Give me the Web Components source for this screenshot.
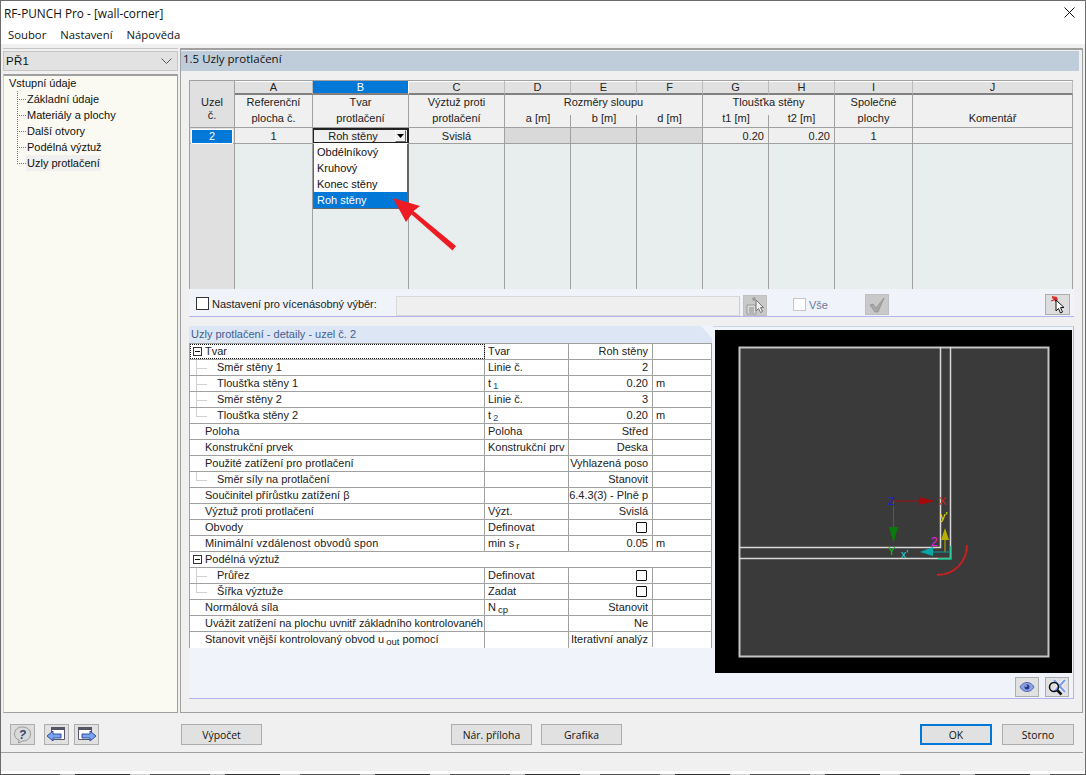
<!DOCTYPE html>
<html lang="cs"><head><meta charset="utf-8"><title>RF-PUNCH Pro</title>
<style>
html,body{margin:0;padding:0;background:#fff}
body{width:1086px;height:775px;overflow:hidden;font-family:"Liberation Sans",Arial,sans-serif}
</style></head>
<body>
<rf-app></rf-app>
<script>
const LINE='#a0a0a0';
function def(name,css,html,init){
  customElements.define(name,class extends HTMLElement{
    constructor(){super();const r=this.attachShadow({mode:'open'});
      r.innerHTML='<style>'+css+'</style>'+(typeof html==='function'?html(this):html);}
    connectedCallback(){if(init&&!this._i){this._i=1;init(this,this.shadowRoot);}}
  });
}
/* ---------- small button ---------- */
def('rf-btn',`:host{display:flex;align-items:center;justify-content:center;box-sizing:border-box;height:21px;background:#e1e1e1;border:1px solid #adadad;font:10.4px "Open Sans",sans-serif;color:#111;flex:none}
:host([primary]){border:2px solid #0078d7}
:host([off]){background:#c9c9c9;border-color:#c0c0c0}
::slotted(svg){display:block}`,'<slot></slot>');

/* ---------- title + menu ---------- */
def('rf-titlebar',`:host{display:flex;align-items:center;justify-content:space-between;height:23px;background:#fff;font:11.8px "Open Sans",sans-serif;color:#111;padding:0 10px 0 3px}
svg{display:block}`,`<span>RF-PUNCH Pro - [wall-corner]</span>
<svg width="11" height="11" viewBox="0 0 11 11"><path d="M.5.5l10 10M10.500.5l-10 10" stroke="#111" fill="none"/></svg>`);
def('rf-menubar',`:host{display:flex;gap:14px;height:20px;align-items:center;background:#fff;padding:0 0 0 7px;font:11.3px "Open Sans",sans-serif;color:#111}`,
`<span>Soubor</span><span>Nastavení</span><span>Nápověda</span>`);

/* ---------- navigation ---------- */
def('rf-nav',`:host{display:flex;flex-direction:column;width:175px;flex:none;box-sizing:border-box;padding-top:2px;border-top:1px solid #c4c4c4}
.combo{display:flex;align-items:center;justify-content:space-between;height:20px;box-sizing:border-box;background:#e2e2e2;border:1px solid #c6c6c6;margin-bottom:3px;padding:0 5px 0 2px;font:11.5px "Liberation Sans",sans-serif;color:#111;letter-spacing:.3px}
.tree{flex:1;background:#fbfaf2;border:1px solid ${LINE};border-top-width:2px;border-left-color:#d0d0d0;padding:0 0 0 5px;font:11px "Liberation Sans",sans-serif;color:#111;position:relative}
.root{height:16px;line-height:16px;margin-top:-1px}
.branch{position:relative;margin:0}
.item{height:16px;line-height:16px;padding-left:18px;position:relative}
.item span{display:inline-block;height:16px;padding:0 1px 0 1px;margin-left:-1px}
.item.sel span{background:#f0f0f0}
.item::before{content:"";position:absolute;left:8px;top:8px;width:9px;border-top:1px dotted #777}
.branch::before{content:"";position:absolute;left:8px;top:0;bottom:7px;border-left:1px dotted #777}`,
`<div class="combo"><span>PŘ1</span><svg width="11" height="6" viewBox="0 0 11 6"><path d="M.5.5l5 5 5-5" fill="none" stroke="#555"/></svg></div>
<div class="tree"><div class="root">Vstupní údaje</div><div class="branch">
<div class="item"><span>Základní údaje</span></div><div class="item"><span>Materiály a plochy</span></div><div class="item"><span>Další otvory</span></div><div class="item"><span>Podélná výztuž</span></div><div class="item sel"><span>Uzly protlačení</span></div></div></div>`);

/* ---------- main input grid ---------- */
const COLS=[45,78,96,96,66,66,66,66,66,78,160];
const LETTERS=['A','B','C','D','E','F','G','H','I','J'];
def('rf-combo-drop',`:host{position:absolute;left:123px;top:62px;width:96px;z-index:3;box-sizing:border-box;background:#fff;border:solid #666;border-width:1px 2px 1px 1px;border-top-color:#fff;font:11px "Liberation Sans",sans-serif;color:#111}
div{height:16px;line-height:16px;padding-left:3px}
.s{background:#0078d7;color:#fff}`,
`<div>Obdélníkový</div><div>Kruhový</div><div>Konec stěny</div><div class="s">Roh stěny</div>`);
def('rf-grid',`:host{display:block;box-sizing:border-box;width:884px;height:209px;position:relative;border:1px solid ${LINE};border-bottom:0;border-right:1px solid ${LINE};background:#f0f0f0;font:11px "Liberation Sans",sans-serif;color:#222;overflow:visible}
.g{display:grid;grid-template-columns:${COLS.map(c=>c+'px').join(' ')};grid-template-rows:14px 16px 17px 16px 145px;margin-right:-1px}
.g>div{box-sizing:border-box;text-align:center;white-space:nowrap;border-right:1px solid ${LINE};line-height:16px}
.corner{grid-row:1/4;grid-column:1;background:#e0e0e0;border-bottom:1px solid ${LINE};padding-top:15px;line-height:13px!important}
.l{background:linear-gradient(#fff 0 1px,#e1e1e1 1px);border-bottom:2px solid #808080;line-height:12px!important;border-right-color:#bbb!important}
.l.on{background:#0078d7;color:#fff;border-right-color:#fff!important}
.h{background:#f0f0f0}
.h1,.h2{line-height:14px!important}
.h1{grid-row:2}
.h2{grid-row:3;border-bottom:1px solid ${LINE}}
.h2.tick{border-right:0!important;background:linear-gradient(${LINE},${LINE}) right bottom/1px 12px no-repeat #f0f0f0}
.d{background:#efefef;border-bottom:1px solid ${LINE}}
.d.gr{background:#d9d9d9}
.d.r{text-align:right;padding-right:4px}
.num{background:#e0e0e0;border-bottom:1px solid ${LINE};padding:1px;text-align:center}
.num b{display:block;font-weight:400;background:#0078d7;color:#fff;height:13px;line-height:12px;border:1px solid #fff}
.cur{border:2px solid #222!important;border-left-width:1px!important;background:#efefef;position:relative;line-height:12px!important;padding-right:15px}
.arr{position:absolute;right:1px;top:0;width:11px;height:12px;box-sizing:border-box;background:#f0f0f0;border:1px solid #fff;border-right-color:#666;border-bottom-color:#666;display:flex;align-items:center;justify-content:center}
.b{background:#e8eded}
.b0{background:#e0e0e0}`,
()=>{
  let s='<div class="g"><div class="corner">Uzel<br>č.</div>';
  LETTERS.forEach((x,i)=>s+=`<div class="l${x==='B'?' on':''}">${x}</div>`);
  const h=(cls,col,t,span)=>`<div class="h ${cls}" style="grid-column:${col}${span?'/span '+span:''}">${t}</div>`;
  s+=h('h1',2,'Referenční')+h('h1',3,'Tvar')+h('h1',4,'Výztuž proti')+h('h1',5,'Rozměry sloupu',3)+h('h1',8,'Tloušťka stěny',2)+h('h1',10,'Společné')+h('h1',11,'');
  s+=h('h2',2,'plocha č.')+h('h2',3,'protlačení')+h('h2',4,'protlačení')+h('h2 tick',5,'a [m]')+h('h2 tick',6,'b [m]')+h('h2',7,'d [m]')+h('h2 tick',8,'t1 [m]')+h('h2',9,'t2 [m]')+h('h2',10,'plochy')+h('h2',11,'Komentář');
  s+=`<div class="num"><b>2</b></div><div class="d">1</div><div class="cur">Roh stěny<span class="arr"><svg width="7" height="4" viewBox="0 0 7 4"><path d="M0 0h7L3.500 4z" fill="#000"/></svg></span></div><div class="d">Svislá</div><div class="d gr"></div><div class="d gr"></div><div class="d gr"></div><div class="d r">0.20</div><div class="d r">0.20</div><div class="d">1</div><div class="d"></div>`;
  s+='<div class="b0"></div>'+'<div class="b"></div>'.repeat(10)+'</div><rf-combo-drop></rf-combo-drop>';
  return s;
});

/* ---------- multi selection bar ---------- */
def('rf-multibar',`:host{display:flex;align-items:flex-start;box-sizing:border-box;width:885px;height:28px;background:#f0f4fa;border-bottom:1px solid #b4b4e8;font:11px "Liberation Sans",sans-serif;color:#222;padding-left:7px}
.cb{width:13px;height:13px;box-sizing:border-box;background:#fff;border:1px solid #333;flex:none;margin-top:8px}
.lbl{margin-left:3px;width:184px;margin-top:8px;line-height:14px;letter-spacing:-.05px}
.inp{width:344px;height:20px;box-sizing:border-box;background:#efefef;border:1px solid #d9d9d9;border-right-color:#ccc;margin-top:7px}
.cb2{width:13px;height:13px;box-sizing:border-box;background:#fff;border:1px solid #c6c6c6;margin:9px 0 0 26px}
.vse{color:#66789a;margin:9px 0 0 3px;width:56px;line-height:14px}`,
`<span class="cb"></span><span class="lbl">Nastavení pro vícenásobný výběr:</span><span class="inp"></span>
<rf-btn off style="width:24px;margin:6px 0 0 3px"><svg width="20" height="18" viewBox="0 0 20 18"><path d="M2 8h9v9H2z" fill="#ddd" stroke="#999"/><path d="M4 11h5M4 13h5M4 15h5" stroke="#888"/><path d="M7 1l3-1 1 3-3 1z" fill="#999"/><path d="M11 3v11l2.500-2.500 2 4 2-1-2-4h3z" fill="#eee" stroke="#777"/></svg></rf-btn>
<span class="cb2"></span><span class="vse">Vše</span>
<rf-btn off style="width:24px;margin-top:5px"><svg width="18" height="16" viewBox="0 0 18 16"><path d="M2 8l3-1 3 4 8-10-6 14H7z" fill="#a8a8a8" stroke="#8b8b8b" stroke-width=".7"/></svg></rf-btn>
<span style="flex:none;width:156px"></span>
<rf-btn style="width:25px;margin-top:5px;background:#ddd"><svg width="20" height="19" viewBox="0 0 20 19"><path d="M4 1l5 1 1 3-3 1-3-3z" fill="#e03030"/><path d="M3 6l5-2M7 4l1 3" stroke="#b02020"/><path d="M8 5v11l2.500-2.500 2 4.500 2-1-2-4.500h3.500z" fill="#fff" stroke="#111"/></svg></rf-btn>`);

/* ---------- details table ---------- */
const sub=(a,b,blue)=>`${a}<span class="sub${blue?' bl':''}">${b}</span>`;
const CB='<i class="chk"></i>';
const ROWS=[
 {n:'Tvar',lv:0,box:1,focus:1,s:'Tvar',v:'Roh stěny'},
 {n:'Směr stěny 1',lv:1,s:'Linie č.',v:'2'},
 {n:'Tloušťka stěny 1',lv:1,s:sub('t','1',1),v:'0.20',u:'m'},
 {n:'Směr stěny 2',lv:1,s:'Linie č.',v:'3'},
 {n:'Tloušťka stěny 2',lv:1,end:1,s:sub('t','2',1),v:'0.20',u:'m'},
 {n:'Poloha',lv:0,s:'Poloha',v:'Střed'},
 {n:'Konstrukční prvek',lv:0,s:'Konstrukční prv',v:'Deska'},
 {n:'Použité zatížení pro protlačení',lv:0,s:'',v:'Vyhlazená poso'},
 {n:'Směr síly na protlačení',lv:1,end:1,solo:1,s:'',v:'Stanovit'},
 {n:'Součinitel přírůstku zatížení β',lv:0,s:'',v:'6.4.3(3) - Plně p'},
 {n:'Výztuž proti protlačení',lv:0,s:'Výzt.',v:'Svislá'},
 {n:'Obvody',lv:0,s:'Definovat',v:CB},
 {n:'Minimální vzdálenost obvodů spon',lv:0,ls:.15,s:sub('min s','r'),v:'0.05',u:'m'},
 {n:'Podélná výztuž',lv:0,box:1,group:1},
 {n:'Průřez',lv:1,s:'Definovat',v:CB},
 {n:'Šířka výztuže',lv:1,end:1,s:'Zadat',v:CB},
 {n:'Normálová síla',lv:0,s:sub('N','cp'),v:'Stanovit'},
 {n:'Uvážit zatížení na plochu uvnitř základního kontrolovanéh',lv:0,ls:-.06,s:'',v:'Ne'},
 {n:'Stanovit vnější kontrolovaný obvod u<span class="sub">out</span> pomocí',lv:0,last:1,s:'',v:'Iterativní analýz'}
];
def('rf-details',`:host{display:flex;flex-direction:column;width:524px;flex:none;font:11px "Liberation Sans",sans-serif;color:#222}
.cap{height:17px;line-height:17px;box-sizing:border-box;background:#dce6f5;color:#3f5f8f;padding-left:2px;clip-path:polygon(0 0,512px 0,523px 12px,523px 100%,0 100%)}
.t{background:#fff;border-top:1px solid ${LINE};border-left:1px solid ${LINE};border-right:1px solid ${LINE};width:523px;box-sizing:border-box}
.r{display:grid;grid-template-columns:295px 84px 84px 1fr;height:16px;line-height:15px;box-sizing:border-box;border-bottom:1px solid ${LINE};white-space:nowrap}
.r.last{border-bottom:0}
.r.group{grid-template-columns:1fr}
.r>div{overflow:hidden;border-right:1px solid ${LINE};box-sizing:border-box;padding-left:3px}
.r>div:last-child{border-right:0}
.r.group>div{border-right:0}
.n{position:relative;padding-left:15px!important}
.n.l1{padding-left:27px!important}
.n.focus{outline:1px dotted #111;outline-offset:-1px}
.v{text-align:right;padding-right:4px;padding-left:0!important;display:flex;justify-content:flex-end;align-items:center;height:15px}
.chk{display:block;width:11px;height:11px;box-sizing:border-box;border:1.5px solid #111;border-radius:1px;background:#fff;margin-right:1px}
.box{position:absolute;left:3px;top:3px;width:9px;height:9px;box-sizing:border-box;border:1px solid #333;background:#fff}
.box::after{content:"";position:absolute;left:1px;right:1px;top:3px;border-top:1px solid #111}
.tl{position:absolute;left:6px;top:-1px;width:11px;height:9px;border-bottom:1px solid #d0d0d0}
.vl{position:absolute;left:6px;top:-1px;height:17px;border-left:1px solid #d0d0d0}
.end .vl{height:9px}
.sub{font-size:9.5px;position:relative;top:2px;margin-left:2px}
.sub.bl{color:#1f4f8f}`,
()=>{
  let s='<div class="cap">Uzly protlačení - detaily - uzel č. 2</div><div class="t">';
  ROWS.forEach(r=>{
    const deco=(r.box?'<span class="box"></span>':'')+(r.lv?'<span class="tl"></span><span class="vl"></span>':'');
    const cl=`n${r.lv?' l1':''}${r.focus?' focus':''}${r.end?' end':''}`;
    const st=r.ls?` style="letter-spacing:${r.ls}px"`:'';
    s+=`<div class="r${r.group?' group':''}${r.last?' last':''}"><div class="${cl}"${st}>${deco}${r.n}</div>`;
    if(!r.group)s+=`<div>${r.s}</div><div class="v">${r.v}</div><div>${r.u||''}</div>`;
    s+='</div>';
  });
  return s+'</div>';
});

/* ---------- preview ---------- */
def('rf-preview',`:host{display:flex;flex-direction:column;flex:1;min-width:0;box-sizing:border-box;padding:3px 1px 0 2px;border-top:1px solid #c9d6ea}
svg.v{display:block;background:#000;flex:none}
.tools{display:flex;justify-content:flex-end;gap:6px;padding:4px 3px 0 0}
text{font:11px "Liberation Sans",sans-serif}`,
`<svg class="v" width="357" height="343" viewBox="715 330 357 343">
<rect x="739.500" y="347.500" width="309" height="309" fill="#3a3a3a" stroke="#c4c4c4" stroke-width="2"/>
<path d="M940.500 347v200.500H739M950.500 347v211.500H739" fill="none" stroke="#d8d8d8" stroke-width="1.500"/>
<path d="M937 575c17 0 30-13 30-30" fill="none" stroke="#c62020" stroke-width="2"/>
<path d="M938 559h13v-13" fill="none" stroke="#00c080" stroke-width="1.500"/>
<path d="M894 501h26" stroke="#a01010"/><path d="M919 497l16 4-16 4z" fill="#a80808"/>
<path d="M893.500 501v27" stroke="#0c8a0c"/><path d="M889 527h9l-4.500 16z" fill="#0a7a0a"/>
<path d="M945 552v-14" stroke="#b0a000" stroke-width="1.200"/><path d="M941 540l4-12 4 12z" fill="#b8b000"/>
<path d="M930 552h20" stroke="#00a0a0"/><path d="M933 547l-13 5 13 4z" fill="#00a8a8"/>
<text x="888" y="505" fill="#2020d0">Z</text><text x="939" y="505" fill="#d02020">X</text>
<text x="888" y="555" fill="#10c010">Y</text><text x="940" y="520" fill="#f0f000">y'</text>
<text x="901" y="558" fill="#20d8d8">x'</text><text x="931" y="546" fill="#f020f0" style="font-size:12px">2</text>
</svg>
<div class="tools">
<rf-btn style="width:24px;height:20px"><svg width="16" height="12" viewBox="0 0 16 12"><path d="M1 6c3-6 11-6 14 0-3 6-11 6-14 0z" fill="#8ba2e8" stroke="#5a6cb0"/><circle cx="8" cy="6" r="2.500" fill="#2a3a88"/><circle cx="7" cy="5" r=".8" fill="#fff"/></svg></rf-btn>
<rf-btn style="width:24px;height:20px"><svg width="20" height="18" viewBox="0 0 20 18"><path d="M7 2l11 12M18 2L7 14" stroke="#fff" stroke-width="4"/><path d="M7 2l11 12M18 2L7 14" stroke="#7f9fee" stroke-width="2.500"/><circle cx="7" cy="9" r="4.500" fill="none" stroke="#111" stroke-width="1.500"/><path d="M10.500 12.500l4 4" stroke="#111" stroke-width="2.500"/></svg></rf-btn>
</div>`);

/* ---------- main panel ---------- */
def('rf-main',`:host{display:flex;flex-direction:column;flex:1;min-width:0;box-sizing:border-box;border:1px solid ${LINE};border-top:2px solid ${LINE};padding:1px 3px 0 0}
.title{height:20px;line-height:21px;flex:none;background:#bfcddb;font:11.5px "Open Sans",sans-serif;color:#111;padding-left:2px}
.body{padding:9px 0 0 8px;flex:1;background:#f0f0f0}
.det{display:flex;width:885px;height:373px;box-sizing:border-box;margin-top:9px;background:#f0f4fa;border-bottom:1px solid #b4b4e8;border-right:1px solid #b4b4e8}`,
`<div class="title">1.5 Uzly protlačení</div>
<div class="body"><rf-grid></rf-grid><rf-multibar></rf-multibar>
<div class="det"><rf-details></rf-details><rf-preview></rf-preview></div></div>`);

/* ---------- footer ---------- */
def('rf-footer',`:host{display:flex;align-items:flex-start;height:40px;flex:none;box-sizing:border-box;padding:11px 0 0 9px;border-bottom:1px solid ${LINE};margin:0 2px 0 0}`,
`<rf-btn style="width:25px;background:#dcdcdc"><svg width="19" height="18" viewBox="0 0 19 18"><path d="M9.500 1c5 0 8 3 8 7s-3 7-8 7l-4 2 .5-3c-3-1-4.500-3-4.500-6 0-4 3-7 8-7z" fill="#d9d9d9" stroke="#9a9a9a"/><text x="9.500" y="13" text-anchor="middle" style="font:italic 700 12px 'Liberation Sans',sans-serif" fill="#33486e">?</text></svg></rf-btn>
<rf-btn style="width:25px;margin-left:9px"><svg width="21" height="17" viewBox="0 0 21 17"><path d="M5.500 1.500h13v12h-13z" fill="#fff" stroke="#556"/><path d="M5 1h14v3H5z" fill="#556"/><path d="M1 10l6-5v3h8v4H7v3z" fill="#7aa4f0" stroke="#2f4fa0"/></svg></rf-btn>
<rf-btn style="width:25px;margin-left:5px"><svg width="21" height="17" viewBox="0 0 21 17"><path d="M2.500 1.500h13v12h-13z" fill="#fff" stroke="#556"/><path d="M2 1h14v3H2z" fill="#556"/><path d="M20 10l-6-5v3H6v4h8v3z" fill="#7aa4f0" stroke="#2f4fa0"/></svg></rf-btn>
<rf-btn style="width:81px;margin-left:82px">Výpočet</rf-btn>
<rf-btn style="width:81px;margin-left:189px">Nár. příloha</rf-btn>
<rf-btn style="width:81px;margin-left:9px">Grafika</rf-btn>
<rf-btn primary style="width:72px;margin-left:298px">OK</rf-btn>
<rf-btn style="width:72px;margin-left:10px">Storno</rf-btn>`);

/* ---------- callout arrow ---------- */
def('rf-callout',`:host{position:absolute;left:390px;top:195px;width:70px;height:58px;z-index:5;pointer-events:none}svg{display:block}`,
`<svg width="70" height="58" viewBox="390 195 70 58"><path d="M393 198l27 8-6.500 5 42.500 35-3.500 4.500-41-36L406 222z" fill="#ed1c24"/></svg>`);

/* ---------- application window ---------- */
def('rf-app',`:host{display:flex;flex-direction:column;position:relative;width:1086px;height:775px;background:repeating-linear-gradient(90deg,#555 0 60px,#bbb 60px 75px,#333 75px 130px,#ccc 130px 150px)}
.win{display:flex;flex-direction:column;height:774px;box-sizing:border-box;border:1px solid #6c6c6c;border-bottom:0;background:#f0f0f0}
.work{display:flex;gap:2px;height:669px;box-sizing:border-box;padding:4px 2px 0 2px;flex:none}
.status{flex:1;background:#f0f0f0;border-bottom:3px solid #fff}`,
`<div class="win"><rf-titlebar></rf-titlebar><rf-menubar></rf-menubar>
<div class="work"><rf-nav></rf-nav><rf-main></rf-main></div>
<rf-footer></rf-footer><div class="status"></div></div><rf-callout></rf-callout>`);
</script>
</body></html>
